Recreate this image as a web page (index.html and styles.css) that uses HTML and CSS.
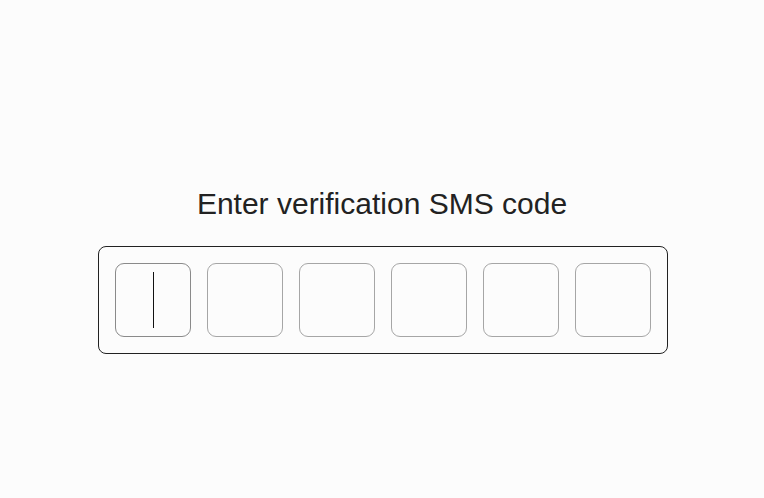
FILE: index.html
```html
<!DOCTYPE html>
<html lang="en">
<head>
<meta charset="utf-8">
<title>Verification</title>
<link rel="stylesheet" href="styles.css">
</head>
<body>
<main class="page">
  <h1 class="title">Enter verification SMS code</h1>
  <div class="code-box">
    <div class="cell cell-active"><span class="caret"></span></div>
    <div class="cell"></div>
    <div class="cell"></div>
    <div class="cell"></div>
    <div class="cell"></div>
    <div class="cell"></div>
  </div>
</main>
</body>
</html>
```
FILE: styles.css
```css
html, body {
  margin: 0;
  padding: 0;
  background: #fcfcfc;
}
body {
  font-family: "Liberation Sans", Arial, sans-serif;
  width: 764px;
  height: 498px;
  overflow: hidden;
}
.page {
  display: flex;
  flex-direction: column;
  align-items: center;
  padding-top: 185px;
}
.title {
  margin: 0;
  font-weight: 400;
  font-size: 30px;
  line-height: 38px;
  color: #222;
  letter-spacing: 0;
}
.code-box {
  margin-top: 23px;
  margin-left: 2px;
  display: flex;
  gap: 16px;
  padding: 16px;
  border: 1px solid #222;
  border-radius: 8px;
  background: #fcfcfc;
}
.cell {
  width: 74px;
  height: 72px;
  border: 1px solid #a6a6a6;
  border-radius: 9px;
  display: flex;
  align-items: center;
  justify-content: center;
  background: #fcfcfc;
}
.cell-active {
  border-color: #8a8a8a;
}
.caret {
  width: 1px;
  height: 56px;
  background: #111;
}
```
